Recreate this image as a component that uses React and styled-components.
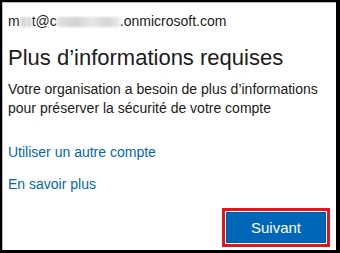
import React from "react";
import styled, { createGlobalStyle } from "styled-components";

const Global = createGlobalStyle`
  html, body { margin: 0; padding: 0; background: #ffffff; }
  body { font-family: "Liberation Sans", Arial, sans-serif; }
`;

const Frame = styled.div`
  box-sizing: border-box;
  width: 340px;
  height: 253px;
  border-style: solid;
  border-color: #000;
  border-width: 2px 4px 3px 2px;
  box-shadow: inset 1px 1px 0 #b8b8b8;
  background: #fff;
  padding: 9px 10px 0 6px;
  display: flex;
  flex-direction: column;
  color: #1b1b1b;
`;

const Email = styled.div`
  font-size: 14px;
  line-height: 20px;
  white-space: nowrap;
  display: flex;
  align-items: center;
`;

const Blur = styled.span`
  display: inline-block;
  width: ${(p) => p.$w}px;
  height: 10px;
  margin-top: 2px;
  background: linear-gradient(90deg, #e2e2e2, #d2d2d2 30%, #e6e6e6 55%, #d6d6d6 80%, #eaeaea);
  filter: blur(1px);
`;

const Title = styled.h1`
  margin: 13px 0 0;
  font-weight: 400;
  font-size: 22px;
  line-height: 28px;
  color: #1b1b1b;
  white-space: nowrap;
`;

const Text = styled.p`
  margin: 8px 0 0;
  font-size: 14px;
  line-height: 19px;
  color: #1b1b1b;
  white-space: nowrap;
`;

const Link = styled.a`
  display: block;
  font-size: 14px;
  line-height: 19px;
  color: #0067b8;
  text-decoration: none;
  margin-top: ${(p) => p.$mt}px;
`;

const Actions = styled.div`
  margin-top: auto;
  display: flex;
  justify-content: flex-end;
  padding-bottom: 5px;
`;

const Button = styled.button`
  box-sizing: border-box;
  width: 100px;
  height: 31px;
  background: #0067b8;
  border: 1px solid #005aa0;
  color: #fff;
  font-family: "Liberation Sans", Arial, sans-serif;
  font-size: 15px;
  padding: 0;
  outline: 3px solid #e8141c;
  outline-offset: 1px;
  margin-bottom: 2px;
`;

export default function App() {
  return (
    <>
      <Global />
      <Frame>
        <Email>
          m<Blur $w={12} />t@c<Blur $w={63} />.onmicrosoft.com
        </Email>
        <Title>Plus d’informations requises</Title>
        <Text>
          Votre organisation a besoin de plus d’informations
          <br />
          pour préserver la sécurité de votre compte
        </Text>
        <Link href="#" $mt={25}>Utiliser un autre compte</Link>
        <Link href="#" $mt={13}>En savoir plus</Link>
        <Actions>
          <Button>Suivant</Button>
        </Actions>
      </Frame>
    </>
  );
}
